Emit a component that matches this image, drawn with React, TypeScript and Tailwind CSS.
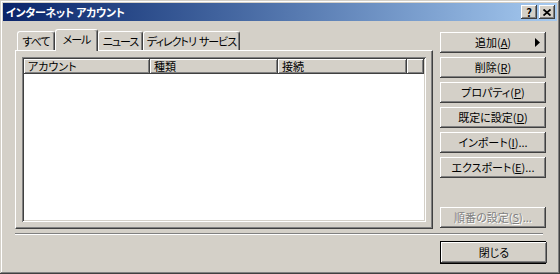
import React from "react";

const jp = "font-['Noto_Sans_CJK_JP','Liberation_Sans',sans-serif] [font-feature-settings:'palt']";

function Btn({ children, extra = "", disabled = false }: { children: React.ReactNode; extra?: string; disabled?: boolean }) {
  return (
    <div
      className={`relative flex h-[21px] w-[106px] items-center justify-center whitespace-nowrap bg-[#d4d0c8] text-[11px] leading-none shadow-[inset_-1px_-1px_#404040,inset_1px_1px_#ffffff,inset_-2px_-2px_#808080,inset_2px_2px_#d4d0c8] ${
        disabled ? "text-[#808080] [text-shadow:1px_1px_0_#ffffff]" : "text-black"
      } ${extra}`}
    >
      {children}
    </div>
  );
}

function Tab({ label, w, active = false }: { label: string; w: string; active?: boolean }) {
  return (
    <div
      className={`flex items-center justify-center whitespace-pre rounded-t-[3px] border-l border-t border-r border-l-white border-t-white border-r-[#404040] bg-[#d4d0c8] text-[11px] leading-none tracking-[-1px] text-black shadow-[inset_-1px_0_#808080] ${w} ${
        active ? "relative z-10 -mb-px h-[22px] pb-[2px]" : "h-[19px]"
      }`}
    >
      {label}
    </div>
  );
}

function HeadCell({ label, w }: { label: string; w: string }) {
  return (
    <div className={`flex h-[15px] items-center whitespace-nowrap pl-[4px] text-[11px] leading-none shadow-[inset_-1px_-1px_#404040,inset_1px_1px_#ffffff,inset_-2px_-2px_#808080] ${w}`}>
      {label}
    </div>
  );
}

export default function App() {
  return (
    <div className={`flex h-[274px] w-[560px] flex-col bg-[#d4d0c8] p-[3px] shadow-[inset_-1px_-1px_#404040,inset_1px_1px_#d4d0c8,inset_-2px_-2px_#808080,inset_2px_2px_#ffffff] ${jp}`}>
      {/* title bar */}
      <div className="flex h-[18px] items-center bg-gradient-to-r from-[#0a246a] to-[#a6caf0] pl-[3px] pr-[2px]">
        <span className="text-[11px] font-bold leading-none tracking-[-0.3px] text-white">インターネット アカウント</span>
        <div className="ml-auto flex items-center">
          <div className="flex h-[14px] w-[16px] items-center justify-center bg-[#d4d0c8] text-[11px] font-bold leading-none text-black shadow-[inset_-1px_-1px_#404040,inset_1px_1px_#ffffff,inset_-2px_-2px_#808080]">
            ?
          </div>
          <div className="ml-[2px] flex h-[14px] w-[16px] items-center justify-center bg-[#d4d0c8] shadow-[inset_-1px_-1px_#404040,inset_1px_1px_#ffffff,inset_-2px_-2px_#808080]">
            <svg width="8" height="7" viewBox="0 0 8 7">
              <path d="M0.5 0.5 L7.5 6.5 M7.5 0.5 L0.5 6.5" stroke="black" strokeWidth="1.8" />
            </svg>
          </div>
        </div>
      </div>

      {/* body */}
      <div className="flex flex-col pl-[12px] pt-[8px]">
        <div className="flex">
          {/* left: tabs + panel */}
          <div className="flex w-[418px] flex-col">
            <div className="flex items-end pl-[2px]">
              <Tab label="すべて" w="w-[38px]" />
              <Tab label="メール" w="w-[43px]" active />
              <Tab label="ニュース" w="w-[45px]" />
              <Tab label="ディレクトリ  サービス" w="w-[97px]" />
            </div>
            <div className="h-[179px] border border-b-[#404040] border-l-white border-r-[#404040] border-t-white p-[6px] shadow-[inset_-1px_-1px_#808080]">
              <div className="flex h-full w-full flex-col bg-white p-[2px] shadow-[inset_1px_1px_#808080,inset_-1px_-1px_#ffffff,inset_2px_2px_#404040,inset_-2px_-2px_#d4d0c8]">
                <div className="flex bg-[#d4d0c8]">
                  <HeadCell label="アカウント" w="w-[126px]" />
                  <HeadCell label="種類" w="w-[128px]" />
                  <HeadCell label="接続" w="w-[129px]" />
                  <HeadCell label="" w="flex-1" />
                </div>
              </div>
            </div>
          </div>

          {/* right: buttons */}
          <div className="ml-[7px] flex flex-col gap-[4px] pb-[1px] pt-[3px]">
            <Btn>
              <span>
                追加(<u className="underline-offset-1">A</u>)
              </span>
              <svg className="absolute right-[6px] top-[6px]" width="5" height="9" viewBox="0 0 5 9">
                <path d="M0 0 L5 4.5 L0 9 Z" fill="black" />
              </svg>
            </Btn>
            <Btn>
              <span>
                削除(<u className="underline-offset-1">R</u>)
              </span>
            </Btn>
            <Btn>
              <span>
                プロパティ(<u className="underline-offset-1">P</u>)
              </span>
            </Btn>
            <Btn>
              <span>
                既定に設定(<u className="underline-offset-1">D</u>)
              </span>
            </Btn>
            <Btn>
              <span>
                インポート(<u className="underline-offset-1">I</u>)...
              </span>
            </Btn>
            <Btn>
              <span>
                エクスポート(<u className="underline-offset-1">E</u>)...
              </span>
            </Btn>
            <Btn extra="mt-auto" disabled>
              <span>
                順番の設定(<u className="underline-offset-1">S</u>)...
              </span>
            </Btn>
          </div>
        </div>

        <div className="mt-[4px] h-[2px] w-[528px] border-b border-t border-b-white border-t-[#808080]" />

        <div className="ml-[425px] mt-[6px] w-[106px] border border-black">
          <Btn extra="w-[104px] h-[19px]">
            <span>閉じる</span>
          </Btn>
        </div>
      </div>
    </div>
  );
}
